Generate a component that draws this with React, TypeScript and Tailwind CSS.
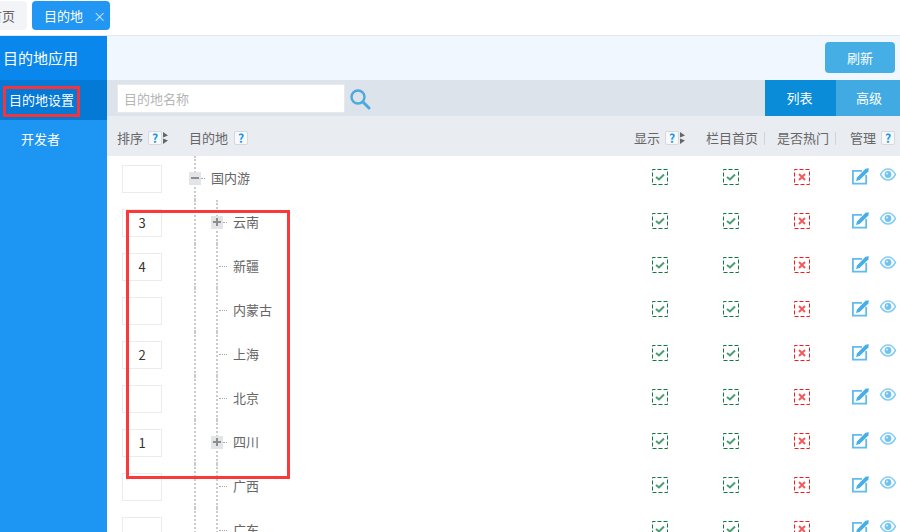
import React from "react";

const rows = [
  { name: "国内游", sort: "", level: 0, icon: "minus" },
  { name: "云南", sort: "3", level: 1, icon: "plus" },
  { name: "新疆", sort: "4", level: 1, icon: "" },
  { name: "内蒙古", sort: "", level: 1, icon: "" },
  { name: "上海", sort: "2", level: 1, icon: "" },
  { name: "北京", sort: "", level: 1, icon: "" },
  { name: "四川", sort: "1", level: 1, icon: "plus" },
  { name: "广西", sort: "", level: 1, icon: "" },
  { name: "广东", sort: "", level: 1, icon: "" },
];

const Help = () => (
  <span className="inline-flex h-[14px] w-[14px] items-center justify-center rounded-[2px] border border-[#d5d8dc] bg-[#f7f9fb] text-[12px] leading-none font-bold text-[#1b95e8]">
    ?
  </span>
);

// little sort arrows next to the help badge
const SortArrows = () => (
  <svg width="5" height="12" viewBox="0 0 5 12" className="ml-[1px]">
    <path d="M0 0 L5 3.5 L0 5.5 Z M0 6.5 L5 8.5 L0 12 Z" fill="#666" />
  </svg>
);

const CheckBox = ({ ok }: { ok: boolean }) => (
  <svg width="16" height="16" viewBox="0 0 16 16" className="-mt-[2px]">
    <rect
      x="0.5"
      y="0.5"
      width="15"
      height="15"
      fill="none"
      stroke={ok ? "#0b7a3c" : "#f01c1c"}
      strokeDasharray="4 2"
      strokeDashoffset="1"
    />
    {ok ? (
      <path d="M4 8 L7 10.5 L12 5.5" fill="none" stroke="#4a9e72" strokeWidth="2" />
    ) : (
      <path d="M5 5 L11 11 M11 5 L5 11" fill="none" stroke="#f6585c" strokeWidth="2" />
    )}
  </svg>
);

const EditIcon = () => (
  <svg width="17" height="17" viewBox="0 0 17 17">
    <path d="M10 2.8 H0.9 V15.6 H14.2 V7" fill="none" stroke="#62bbee" strokeWidth="1.8" />
    <path d="M4 13 L5 9.5 L13.5 0.8 L16.8 0.2 L16.4 3.4 L7.6 12 Z" fill="#46aee8" />
  </svg>
);

const EyeIcon = () => (
  <svg width="16" height="13" viewBox="0 0 16 13">
    <path
      d="M0.5 6.5 C3 2 5.5 1 8 1 C10.5 1 13 2 15.5 6.5 C13 11 10.5 12 8 12 C5.5 12 3 11 0.5 6.5 Z"
      fill="none"
      stroke="#86cdf2"
      strokeWidth="1.6"
    />
    <circle cx="8" cy="6.5" r="3.4" fill="#72c2ee" />
    <circle cx="7" cy="5.5" r="1" fill="#d8effb" />
  </svg>
);

const SearchIcon = () => (
  <svg width="22" height="22" viewBox="0 0 22 22">
    <circle cx="9" cy="9" r="6.5" fill="none" stroke="#4ba9dd" strokeWidth="2.4" />
    <path d="M14 14 L20 20" stroke="#4ba9dd" strokeWidth="3" strokeLinecap="round" />
  </svg>
);

const TreeBox = ({ plus }: { plus: boolean }) => (
  <span className="relative flex h-[13px] w-3 items-center justify-center bg-[#e2e4e8]">
    <span className="h-[2px] w-2 bg-[#8d8d8d]" />
    {plus && <span className="absolute h-2 w-[2px] bg-[#8d8d8d]" />}
  </span>
);

const Row = ({ row }: { row: (typeof rows)[number] }) => (
  <div className="grid h-11 shrink-0 grid-cols-[82px_1fr_71px_71px_71px_62px] items-center">
    <div className="pt-px pl-[15px]">
      <input
        defaultValue={row.sort}
        className="block h-7 w-10 border border-[#ececec] bg-white pb-px text-center text-[13px] text-[#333] outline-none"
      />
    </div>
    <div className="relative flex h-full items-center text-[13px] text-[#666]">
      {/* tree guides */}
      <span className="absolute top-0 bottom-0 left-[5px] w-0 border-l-2 border-dotted border-[#cacaca]" />
      {row.level === 1 && (
        <span className="absolute top-0 bottom-0 left-[27px] w-0 border-l-2 border-dotted border-[#cacaca]" />
      )}
      <div className={row.level === 1 ? "flex items-center pl-[22px]" : "flex items-center"}>
        {row.icon ? (
          <>
            <TreeBox plus={row.icon === "plus"} />
            <span className="w-[4px] border-t border-dotted border-[#aaa]" />
          </>
        ) : (
          <>
            <span className="h-3 w-[8px]" />
            <span className="w-[8px] border-t border-dotted border-[#aaa]" />
          </>
        )}
        <span className="ml-[6px]">{row.name}</span>
      </div>
    </div>
    <div className="flex justify-center pr-[1px]">
      <CheckBox ok />
    </div>
    <div className="flex justify-center pr-[1px]">
      <CheckBox ok />
    </div>
    <div className="flex justify-center pr-[1px]">
      <CheckBox ok={false} />
    </div>
    <div className="flex items-start gap-[11px] pl-[14px]">
      <span className="-mt-[3px] flex">
        <EditIcon />
      </span>
      <span className="-mt-[3px] flex">
        <EyeIcon />
      </span>
    </div>
  </div>
);

export default function App() {
  return (
    <div
      className="relative flex h-[532px] w-[900px] flex-col overflow-hidden bg-white"
      style={{ fontFamily: '"Noto Sans CJK SC", "Noto Sans", sans-serif' }}
    >
      {/* tabs */}
      <div className="flex h-9 shrink-0 gap-[5px] overflow-hidden border-b border-[#e4e9f0] pt-[1px]">
        <div className="-ml-[11px] flex h-[29px] w-[38px] items-center rounded-[4px] bg-[#f3f4f8] text-[13px] text-[#666]">
          <span>首页</span>
        </div>
        <div className="flex h-[29px] w-[78px] items-center rounded-[4px] bg-[#2196f3] pl-3 text-[13px] text-white">
          <span>目的地</span>
          <span className="ml-[10px] text-[13px] leading-none text-[#cfe6fb]">×</span>
        </div>
      </div>

      <div className="flex min-h-0 flex-1">
        {/* sidebar */}
        <div className="flex w-[107px] shrink-0 flex-col bg-[#1d95f3] text-white">
          <div className="flex h-11 items-center bg-[#0a87ec] pl-[3px] text-[15px]">目的地应用</div>
          <div className="flex h-10 items-center bg-[#0479d6] pl-[9px] text-[13px]">目的地设置</div>
          <div className="flex h-10 items-center pb-[2px] pl-[21px] text-[13px]">开发者</div>
        </div>

        <div className="flex min-w-0 flex-1 flex-col">
          {/* toolbar */}
          <div className="flex h-11 shrink-0 items-start justify-end bg-[#f0f7ff] pt-[6px] pr-[5px]">
            <button className="h-[31px] w-[70px] rounded-[4px] bg-[#45aee5] text-[13px] text-white">刷新</button>
          </div>

          {/* search */}
          <div className="flex h-9 shrink-0 items-center bg-[#dde3ea] pl-[10px]">
            <input
              placeholder="目的地名称"
              className="h-[29px] w-[228px] border border-[#e6e9ee] bg-white pl-[6px] text-[13px] outline-none placeholder:text-[#b5b5b5]"
            />
            <span className="mt-[2px] ml-[4px] flex">
              <SearchIcon />
            </span>
            <div className="ml-auto flex h-full text-[13px] text-white">
              <div className="flex w-[71px] items-center justify-center bg-[#0a8cd8] pr-[2px]">列表</div>
              <div className="flex w-[64px] items-center justify-center bg-[#41aae2] pl-[2px]">高级</div>
            </div>
          </div>

          {/* table head */}
          <div className="grid h-10 shrink-0 grid-cols-[82px_1fr_71px_71px_71px_62px] items-center bg-[#e9ecf1] pt-[4px] text-[13px] text-[#666]">
            <div className="flex items-center pl-[10px]">
              <span>排序</span>
              <span className="ml-[5px] flex items-center">
                <Help />
                <SortArrows />
              </span>
            </div>
            <div className="flex items-center">
              <span>目的地</span>
              <span className="ml-[6px] flex">
                <Help />
              </span>
            </div>
            <div className="flex items-center pl-[9px]">
              <span>显示</span>
              <span className="ml-[5px] flex items-center">
                <Help />
                <SortArrows />
              </span>
            </div>
            <div className="flex items-center pl-[10px]">
              <span className="whitespace-nowrap">栏目首页</span>
              <span className="ml-[6px] h-[13px] border-l border-[#d0d3d8]" />
            </div>
            <div className="flex items-center pl-[10px]">
              <span className="whitespace-nowrap">是否热门</span>
              <span className="ml-[6px] h-[13px] border-l border-[#d0d3d8]" />
            </div>
            <div className="flex items-center pl-[12px]">
              <span>管理</span>
              <span className="ml-[5px] flex">
                <Help />
              </span>
            </div>
          </div>

          {/* rows */}
          <div className="flex min-h-0 flex-1 flex-col overflow-hidden">
            {rows.map((row) => (
              <Row key={row.name} row={row} />
            ))}
          </div>
        </div>
      </div>

      {/* red annotation boxes drawn over the screenshot */}
      <div className="absolute top-[86px] left-[3px] h-[31px] w-[77px] border-[3px] border-[#f5333a]" />
      <div className="absolute top-[210px] left-[126px] h-[269px] w-[164px] border-[3px] border-[#f93a3a]" />
    </div>
  );
}
